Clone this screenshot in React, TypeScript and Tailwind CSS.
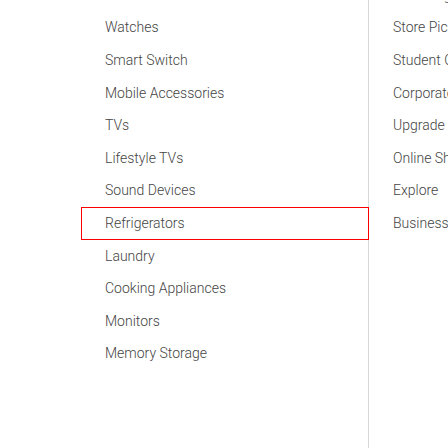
const leftItems = [
  "Audio",
  "Watches",
  "Smart Switch",
  "Mobile Accessories",
  "TVs",
  "Lifestyle TVs",
  "Sound Devices",
  "Refrigerators",
  "Laundry",
  "Cooking Appliances",
  "Monitors",
  "Memory Storage",
];

const rightItems = [
  "Samsung Rewards",
  "Store Pickup",
  "Student Offers",
  "Corporate Offers",
  "Upgrade Program",
  "Online Shop Benefits",
  "Explore",
  "Business",
];

export default function App() {
  return (
    <div className="h-[448px] w-[448px] overflow-hidden bg-white font-['Roboto',sans-serif] text-[14px] font-light text-[#444]">
      <div className="mt-[-21px] flex">
        <div className="ml-[81px] w-[288px] shrink-0">
          {leftItems.map((item) => (
            <div
              key={item}
              className={
                item === "Refrigerators"
                  ? "relative z-10 flex h-[32.6px] items-center border border-[#f00] pl-[23px]"
                  : "flex h-[32.6px] items-center pl-6"
              }
            >
              {item}
            </div>
          ))}
        </div>
        <div className="-ml-px h-[480px] flex-1 overflow-hidden whitespace-nowrap border-l border-[#d8d8d8] pl-6">
          {rightItems.map((item) => (
            <div key={item} className="flex h-[32.6px] items-center">
              {item}
            </div>
          ))}
        </div>
      </div>
    </div>
  );
}
